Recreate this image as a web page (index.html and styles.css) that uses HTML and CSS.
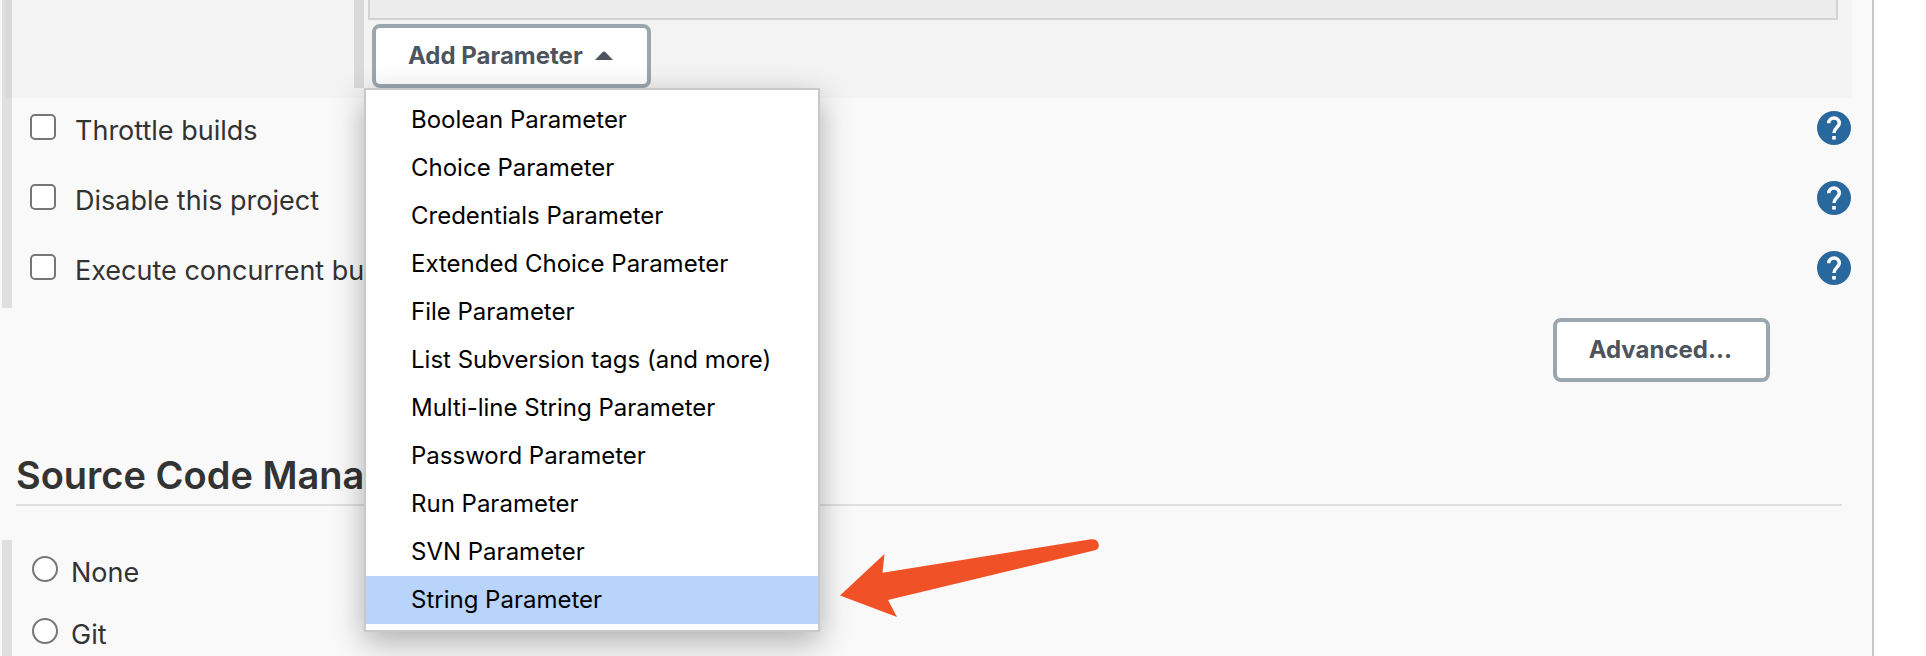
FILE: index.html
```html
<!DOCTYPE html>
<html lang="en">
<head>
<meta charset="utf-8">
<title>Project configuration</title>
<link rel="stylesheet" href="styles.css">
</head>
<body>
<svg class="sprite" aria-hidden="true">
  <symbol id="help-icon" viewBox="0 0 34 34">
    <circle cx="17" cy="17" r="17" fill="#29689c"/>
    <path d="M11.700 12.300A5.300 5.300 0 0 1 22.300 12.300C22.300 16 17 16.600 17 21.900" fill="none" stroke="#fff" stroke-width="3.500"/>
    <rect x="15.200" y="25" width="3.600" height="3.600" fill="#fff"/>
  </symbol>
</svg>
<main class="panel">
  <section class="section">
    <div class="parameters">
      <div class="parameters-body">
        <div class="parameter-box"></div>
        <div class="dropdown">
          <button class="button" type="button" aria-haspopup="true" aria-expanded="true">Add Parameter
            <svg class="caret" viewBox="0 0 18 9" aria-hidden="true"><path d="M0 9 7.500 1.200Q9-.4 10.500 1.200L18 9Z" fill="#4d545d"/></svg>
          </button>
          <ul class="menu">
            <li><a class="item" href="#">Boolean Parameter</a></li>
            <li><a class="item" href="#">Choice Parameter</a></li>
            <li><a class="item" href="#">Credentials Parameter</a></li>
            <li><a class="item" href="#">Extended Choice Parameter</a></li>
            <li><a class="item" href="#">File Parameter</a></li>
            <li><a class="item" href="#">List Subversion tags (and more)</a></li>
            <li><a class="item" href="#">Multi-line String Parameter</a></li>
            <li><a class="item" href="#">Password Parameter</a></li>
            <li><a class="item" href="#">Run Parameter</a></li>
            <li><a class="item" href="#">SVN Parameter</a></li>
            <li class="pointed"><a class="item selected" href="#">String Parameter</a>
              <svg class="arrow" viewBox="0 0 260 80" aria-hidden="true"><path d="M0 57.500 44.500 16 42.500 34.800 251 1.300Q257 .5 258.500 5.500 260 11 255 12.200L48 62 57 79Z" fill="#f05127"/></svg>
            </li>
          </ul>
        </div>
      </div>
    </div>
    <div class="options">
      <div class="option"><label class="choice"><input class="check" type="checkbox"><span>Throttle builds</span></label><a class="help" href="#" aria-label="Help for Throttle builds"><svg><use href="#help-icon"/></svg></a></div>
      <div class="option"><label class="choice"><input class="check" type="checkbox"><span>Disable this project</span></label><a class="help" href="#" aria-label="Help for Disable this project"><svg><use href="#help-icon"/></svg></a></div>
      <div class="option"><label class="choice"><input class="check" type="checkbox"><span>Execute concurrent builds</span></label><a class="help" href="#" aria-label="Help for Execute concurrent builds"><svg><use href="#help-icon"/></svg></a></div>
    </div>
  </section>
  <div class="actions"><button class="button" type="button">Advanced...</button></div>
  <h2 class="heading">Source Code Management</h2>
  <section class="section sources">
    <label class="choice source"><input class="check radio" type="radio" name="scm"><span>None</span></label>
    <label class="choice source"><input class="check radio" type="radio" name="scm"><span>Git</span></label>
  </section>
</main>
</body>
</html>
```

FILE: styles.css
```css
* { box-sizing: border-box; }

body {
  margin: 0;
  background: #fff;
  color: #333;
  font-family: Inter, "Liberation Sans", sans-serif;
  font-size: 27px;
}

.sprite { position: absolute; width: 0; height: 0; }

.panel {
  display: flex;
  flex-direction: column;
  min-height: 100vh;
  margin-right: 52px;
  padding-left: 2px;
  border-right: 2px solid #c8c8c8;
  background: #f9f9f9;
}

.section { border-left: 10px solid #dfdfdf; }

.parameters {
  height: 98px;
  margin: 0 20px 0 -6px;
  padding-left: 348px;
  background: rgba(0, 0, 0, 0.025);
}

.parameters-body {
  height: 88px;
  padding: 0 14px 0 4px;
  border-left: 10px solid #d9d9d9;
}

.parameter-box {
  height: 20px;
  border: 2px solid #d3d3d3;
  border-top: 0;
  background: #ececec;
}

.dropdown {
  position: relative;
  display: inline-block;
  margin: 4px 0 0 4px;
}

.button {
  display: flex;
  align-items: center;
  gap: 12px;
  height: 64px;
  padding: 0 34px 2px 32px;
  border: 4px solid #9ba7af;
  border-radius: 8px;
  background: #fff;
  color: #4d545d;
  font: 700 24px Inter, "Liberation Sans", sans-serif;
}

.caret { width: 18px; height: 9px; }

.menu {
  position: absolute;
  top: 64px;
  left: -8px;
  z-index: 2;
  width: 456px;
  margin: 0;
  padding: 6px 0;
  border: 2px solid #c8c8c8;
  background: #fff;
  box-shadow: 0 10px 30px rgba(0, 0, 0, 0.3);
  list-style: none;
}

.item {
  display: block;
  padding: 0 45px;
  color: #000;
  font-size: 24px;
  line-height: 48px;
  text-decoration: none;
  white-space: nowrap;
}

.selected { background: #b8d4fb; }

.pointed { position: relative; }

.arrow {
  position: absolute;
  top: -38px;
  left: calc(100% + 22px);
  width: 260px;
  height: 80px;
}

.options {
  display: flex;
  flex-direction: column;
  gap: 10px;
  padding: 0 21px 10px 18px;
}

.option {
  display: flex;
  align-items: center;
  justify-content: space-between;
  height: 60px;
}

.choice {
  display: flex;
  align-items: center;
  gap: 19px;
  padding-bottom: 2px;
  line-height: 32px;
}

.choice span { padding-top: 8px; }

.check {
  appearance: none;
  width: 26px;
  height: 26px;
  margin: 0;
  border: 2px solid #767676;
  border-radius: 5px;
  background: #fff;
}

.radio { border-radius: 50%; }

.help, .help svg {
  display: block;
  width: 34px;
  height: 34px;
}

.actions {
  display: flex;
  justify-content: flex-end;
  padding: 10px 102px 0 0;
}

.heading {
  margin: 68px 30px 34px 14px;
  padding-bottom: 4px;
  border-bottom: 2px solid #dfdfdf;
  font-size: 38px;
  font-weight: 600;
  line-height: 50px;
}

.sources {
  display: flex;
  flex: 1;
  flex-direction: column;
  gap: 20px;
  padding: 9px 0 0 20px;
}

.source { gap: 13px; height: 42px; }
```
